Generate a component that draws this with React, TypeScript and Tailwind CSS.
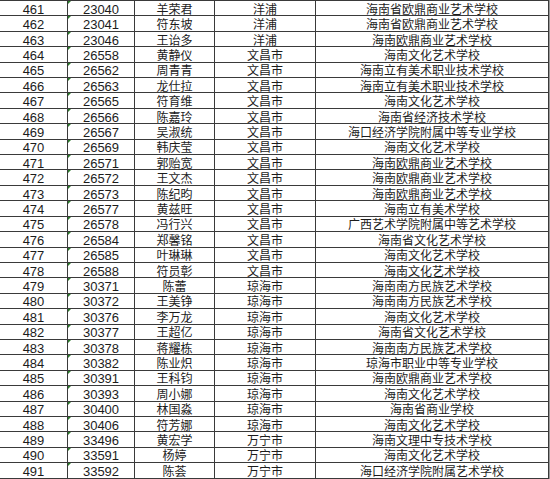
import React from "react";

const rows: [string, string, string, string, string][] = [
  ["461", "23040", "羊荣君", "洋浦", "海南省欧鼎商业艺术学校"],
  ["462", "23041", "符东坡", "洋浦", "海南省欧鼎商业艺术学校"],
  ["463", "23046", "王诒多", "洋浦", "海南欧鼎商业艺术学校"],
  ["464", "26558", "黄静仪", "文昌市", "海南文化艺术学校"],
  ["465", "26562", "周青青", "文昌市", "海南立有美术职业技术学校"],
  ["466", "26563", "龙仕拉", "文昌市", "海南立有美术职业技术学校"],
  ["467", "26565", "符育维", "文昌市", "海南文化艺术学校"],
  ["468", "26566", "陈嘉玲", "文昌市", "海南省经济技术学校"],
  ["469", "26567", "吴淑统", "文昌市", "海口经济学院附属中等专业学校"],
  ["470", "26569", "韩庆莹", "文昌市", "海南文化艺术学校"],
  ["471", "26571", "郭贻宽", "文昌市", "海南欧鼎商业艺术学校"],
  ["472", "26572", "王文杰", "文昌市", "海南欧鼎商业艺术学校"],
  ["473", "26573", "陈纪昀", "文昌市", "海南欧鼎商业艺术学校"],
  ["474", "26577", "黄兹旺", "文昌市", "海南立有美术学校"],
  ["475", "26578", "冯行兴", "文昌市", "广西艺术学院附属中等艺术学校"],
  ["476", "26584", "郑馨铭", "文昌市", "海南省文化艺术学校"],
  ["477", "26585", "叶琳琳", "文昌市", "海南文化艺术学校"],
  ["478", "26588", "符员彰", "文昌市", "海南文化艺术学校"],
  ["479", "30371", "陈蕾", "琼海市", "海南南方民族艺术学校"],
  ["480", "30372", "王美铮", "琼海市", "海南南方民族艺术学校"],
  ["481", "30376", "李万龙", "琼海市", "海南文化艺术学校"],
  ["482", "30377", "王超亿", "琼海市", "海南省文化艺术学校"],
  ["483", "30378", "蒋耀栋", "琼海市", "海南南方民族艺术学校"],
  ["484", "30382", "陈业炽", "琼海市", "琼海市职业中等专业学校"],
  ["485", "30391", "王科钧", "琼海市", "海南欧鼎商业艺术学校"],
  ["486", "30393", "周小娜", "琼海市", "海南文化艺术学校"],
  ["487", "30400", "林国淼", "琼海市", "海南省商业学校"],
  ["488", "30406", "符芳娜", "琼海市", "海南文化艺术学校"],
  ["489", "33496", "黄宏学", "万宁市", "海南文理中专技术学校"],
  ["490", "33591", "杨婷", "万宁市", "海南文化艺术学校"],
  ["491", "33592", "陈荟", "万宁市", "海口经济学院附属艺术学校"],
];

const num = "font-['Liberation_Sans',Arial,sans-serif] text-[13px]";
const cjk = "font-['Noto_Sans_CJK_SC',sans-serif] text-[12px]";

export default function App() {
  return (
    <div className="w-[550px] h-[479px] bg-[#9a9a9a] overflow-hidden">
      <div className="w-[549px] bg-white border-t border-r border-[#3a3a3a] text-[#1c1c1c] leading-none">
        {rows.map((r) => (
          <div key={r[0]} className="flex h-[15.41px] border-b border-[#3a3a3a]">
            <div className={`w-[68px] flex items-center justify-center pt-[2px] border-r border-[#3a3a3a] ${num}`}>{r[0]}</div>
            <div className={`relative w-[67px] flex items-center justify-center pt-[2px] border-r border-[#3a3a3a] ${num}`}>
              <span className="absolute left-0 top-0 w-0 h-0 border-t-[3px] border-t-[#2a7a2a] border-r-[3px] border-r-transparent" />
              {r[1]}
            </div>
            <div className={`w-[80px] flex items-center justify-center pt-[1px] border-r border-[#3a3a3a] ${cjk}`}>{r[2]}</div>
            <div className={`w-[101px] flex items-center justify-center pt-[1px] border-r border-[#3a3a3a] ${cjk}`}>{r[3]}</div>
            <div className={`flex-1 flex items-center justify-center pt-[1px] ${cjk}`}>{r[4]}</div>
          </div>
        ))}
      </div>
    </div>
  );
}
